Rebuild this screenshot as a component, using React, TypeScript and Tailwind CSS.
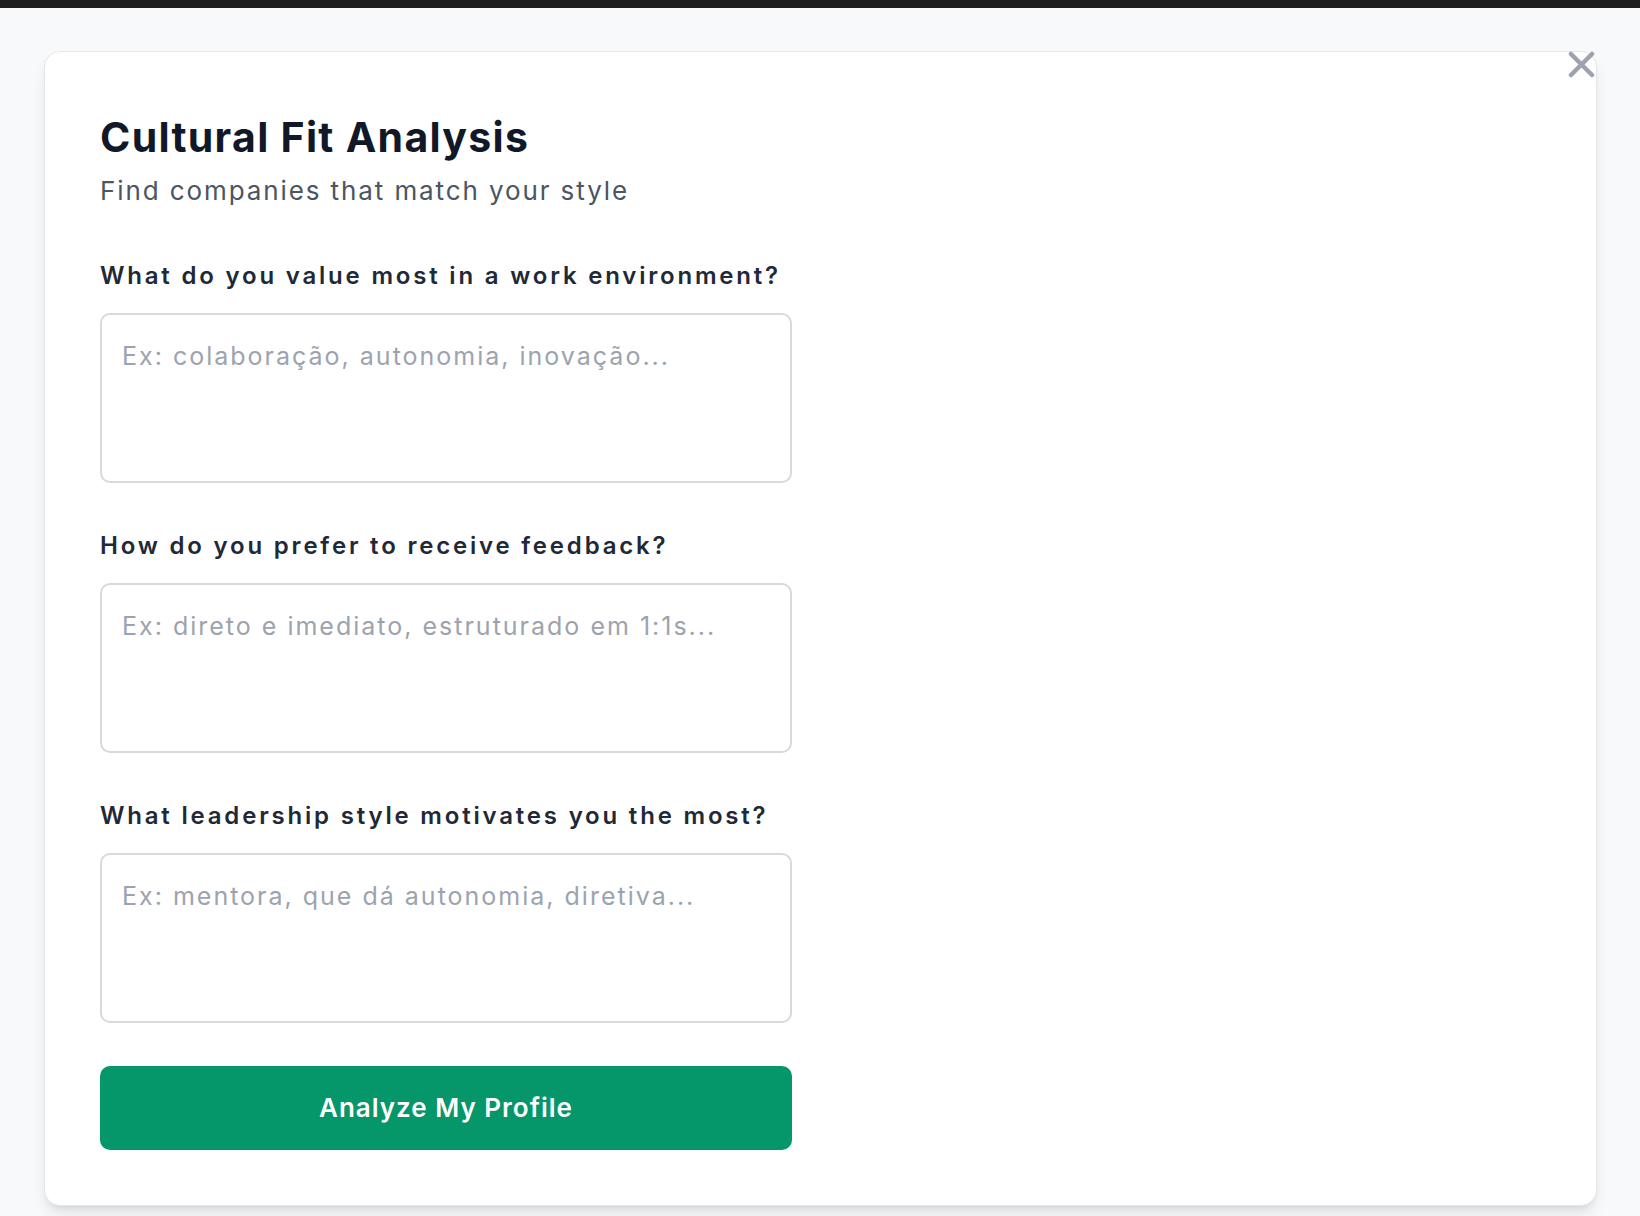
import React from "react";

function Field({ label, placeholder, first }: { label: string; placeholder: string; first?: boolean }) {
  return (
    <div className={first ? "mt-[54px]" : "mt-[48px]"}>
      <label className="block text-[24px] leading-[30px] font-semibold tracking-[2.8px] text-[#1f2937]">{label}</label>
      <textarea
        placeholder={placeholder}
        className="mt-[22px] block w-full h-[170px] resize-none rounded-[10px] border-2 border-[#d6d9de] bg-white pl-[20px] pr-[20px] pt-[25px] text-[25px] leading-[32px] tracking-[2px] text-gray-800 placeholder:text-[#9ca3af] outline-none"
      />
    </div>
  );
}

export default function App() {
  return (
    <div className="min-h-[1216px] bg-[#f8f9fa] font-['Inter',sans-serif]">
      <div className="h-[8px] bg-[#1e1e1e]" />
      <div className="px-[44px] pt-[43px] pb-[10px]">
        <div className="relative w-[1553px] rounded-2xl border border-gray-200 bg-white shadow-lg">
          <button className="absolute right-[1px] top-[-1px] flex h-[27px] w-[27px] items-center justify-center" aria-label="Close">
            <svg width="27" height="27" viewBox="0 0 27 27" fill="none">
              <path d="M3 3L24 24M24 3L3 24" stroke="#9ca3af" strokeWidth="4.5" strokeLinecap="round" />
            </svg>
          </button>
          <div className="w-[692px] ml-[55px] pt-[61px] pb-[55px]">
            <h1 className="text-[41px] leading-[48px] font-bold tracking-[1.3px] text-[#111827]">Cultural Fit Analysis</h1>
            <p className="mt-[14px] text-[26px] leading-[32px] tracking-[1.9px] text-[#4b5563]">Find companies that match your style</p>
            <Field first label="What do you value most in a work environment?" placeholder="Ex: colaboração, autonomia, inovação..." />
            <Field label="How do you prefer to receive feedback?" placeholder="Ex: direto e imediato, estruturado em 1:1s..." />
            <Field label="What leadership style motivates you the most?" placeholder="Ex: mentora, que dá autonomia, diretiva..." />
            <button className="mt-[43px] flex h-[84px] w-full items-center justify-center rounded-[10px] bg-[#059669] text-[26px] leading-[32px] font-semibold tracking-[1px] text-white">
              Analyze My Profile
            </button>
          </div>
        </div>
      </div>
    </div>
  );
}
